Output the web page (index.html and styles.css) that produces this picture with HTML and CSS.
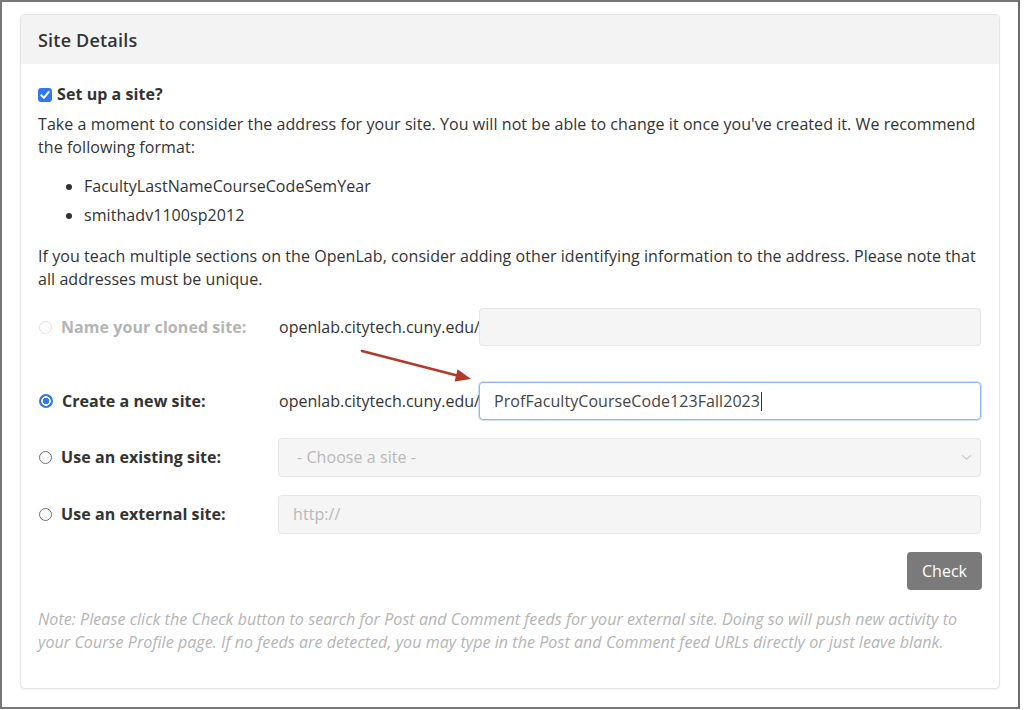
FILE: index.html
```html
<!DOCTYPE html>
<html lang="en">
<head>
<meta charset="utf-8">
<title>Site Details</title>
<link rel="stylesheet" href="styles.css">
</head>
<body>
<div class="frame">
  <section class="card">
    <header class="card-head"><h2>Site Details</h2></header>
    <div class="card-body">
      <label class="setup"><span class="checkbox"><svg viewBox="0 0 14 14" width="14" height="14"><path d="M3.3 7.2 L5.9 9.9 L10.8 3.9" fill="none" stroke="#fff" stroke-width="2" stroke-linecap="round" stroke-linejoin="round"/></svg></span>Set up a site?</label>
      <p class="text">Take a moment to consider the address for your site. You will not be able to change it once you've created it. We recommend the following format:</p>
      <ul class="formats">
        <li>FacultyLastNameCourseCodeSemYear</li>
        <li>smithadv1100sp2012</li>
      </ul>
      <p class="text">If you teach multiple sections on the OpenLab, consider adding other identifying information to the address. Please note that all addresses must be unique.</p>

      <div class="rows">
        <div class="row row-cloned">
          <label class="opt disabled"><span class="radio radio-disabled"></span>Name your cloned site:</label>
          <div class="field">
            <span class="prefix">openlab.citytech.cuny.edu/</span>
            <div class="input input-disabled"></div>
          </div>
        </div>
        <div class="row row-new">
          <label class="opt"><span class="radio radio-checked"></span>Create a new site:</label>
          <div class="field">
            <span class="prefix">openlab.citytech.cuny.edu/</span>
            <div class="input input-focus"><span class="value">ProfFacultyCourseCode123Fall2023</span><span class="caret"></span></div>
          </div>
        </div>
        <div class="row">
          <label class="opt"><span class="radio"></span>Use an existing site:</label>
          <div class="field">
            <div class="input input-disabled select"><span class="placeholder">- Choose a site -</span><svg class="chev" viewBox="0 0 12 8" width="11" height="7"><path d="M1 1.5 L6 6 L11 1.5" fill="none" stroke="#c4c4c4" stroke-width="1.2"/></svg></div>
          </div>
        </div>
        <div class="row">
          <label class="opt"><span class="radio"></span>Use an external site:</label>
          <div class="field">
            <div class="input input-disabled"><span class="placeholder">http://</span></div>
          </div>
        </div>
      </div>

      <div class="actions"><button class="check" type="button">Check</button></div>
      <p class="note">Note: Please click the Check button to search for Post and Comment feeds for your external site. Doing so will push new activity to your Course Profile page. If no feeds are detected, you may type in the Post and Comment feed URLs directly or just leave blank.</p>
    </div>
  </section>
</div>
<svg class="arrow" width="1024" height="710" viewBox="0 0 1024 710">
  <line x1="362" y1="351" x2="459" y2="376" stroke="#b3392a" stroke-width="2.6" stroke-linecap="round"/>
  <polygon points="471,379 457.6,369.2 454.6,381.6" fill="#b3392a"/>
</svg>
</body>
</html>
```
FILE: styles.css
```css
* { box-sizing: border-box; }
html, body { margin: 0; padding: 0; background: #fff; }
body {
  position: relative;
  width: 1024px;
  height: 710px;
  overflow: hidden;
  font-family: "Open Sans", "Noto Sans", sans-serif;
  font-size: 16px;
  line-height: 23px;
  letter-spacing: 0.065px;
  color: #333;
}
.frame {
  width: 1020px;
  height: 709px;
  border: 2px solid #777;
  border-right-color: #6a6a6a;
  padding: 12px 18px 0 18px;
  background: #fff;
}
.card {
  border: 1px solid #e4e4e4;
  border-radius: 4px;
  box-shadow: 0 1px 2px rgba(0,0,0,0.06);
  height: 675px;
  overflow: hidden;
}
.card-head {
  height: 49px;
  background: #f3f3f3;
  display: flex;
  align-items: center;
  padding: 0 17px;
}
.card-head h2 {
  margin: 0;
  font-size: 18px;
  font-weight: 600;
  color: #333;
  line-height: 24px;
  letter-spacing: 0.2px;
}
.card-body {
  padding: 19px 18px 30px 17px;
}
.setup {
  display: flex;
  align-items: center;
  gap: 5px;
  font-weight: 700;
  line-height: 23px;
}
.checkbox {
  width: 14px;
  height: 14px;
  border-radius: 3px;
  background: #2f78f0;
  display: inline-flex;
}
.text { margin: 7px 0 0; }
.formats {
  margin: 16px 0 0;
  padding-left: 46px;
}
.formats li + li { margin-top: 6px; }
.formats + .text { margin-top: 18px; }

.rows {
  margin-top: 17px;
  display: flex;
  flex-direction: column;
  gap: 18px;
}
.row {
  display: grid;
  grid-template-columns: 240px 1fr;
  align-items: center;
  min-height: 38px;
}
.row-cloned { margin-bottom: 18px; }
.opt {
  display: flex;
  align-items: center;
  gap: 9px;
  font-weight: 700;
  color: #333;
  padding-left: 1px;
}
.opt.disabled { color: #b4b4b4; }
.radio {
  width: 13px;
  height: 13px;
  border-radius: 50%;
  border: 1px solid #6f6f6f;
  background: #fff;
  flex: none;
}
.radio-disabled { border-color: #e2e2e2; }
.radio-checked {
  width: 14px;
  height: 14px;
  border: none;
  background: radial-gradient(circle, #2f78f0 0 3px, #fff 3.5px 4.5px, #2f78f0 5px);
}
.field {
  display: flex;
  align-items: center;
}
.prefix {
  width: 201px;
  flex: none;
  color: #333;
  padding-left: 1px;
  letter-spacing: 0;
}
.input {
  flex: 1;
  height: 38px;
  border-radius: 4px;
  border: 1px solid #e6e6e6;
  display: flex;
  align-items: center;
  padding: 0 14px;
}
.input-disabled { background: #f5f5f5; }
.row .field .select, .row:last-child .input { height: 39px; }
.input-focus {
  background: #fff;
  border-color: #8fb6ee;
  box-shadow: 0 0 0 1px rgba(120,165,235,0.35);
  color: #444;
}
.caret {
  display: inline-block;
  width: 1px;
  height: 19px;
  background: #333;
  margin-left: 1px;
}
.placeholder { color: #b8b8b8; }
.select { justify-content: space-between; padding: 0 8px 0 18px; }
.chev { display: block; }
.actions {
  display: flex;
  justify-content: flex-end;
  margin-top: 18px;
}
.check {
  width: 75px;
  height: 38px;
  border: none;
  border-radius: 4px;
  background: #7a7a7a;
  color: #fff;
  font-family: inherit;
  font-size: 16px;
  padding: 0;
  margin-right: -1px;
}
.note {
  margin: 18px 0 0;
  font-style: italic;
  color: #b4b4b4;
}
.arrow {
  position: absolute;
  left: 0;
  top: 0;
  pointer-events: none;
}
```
